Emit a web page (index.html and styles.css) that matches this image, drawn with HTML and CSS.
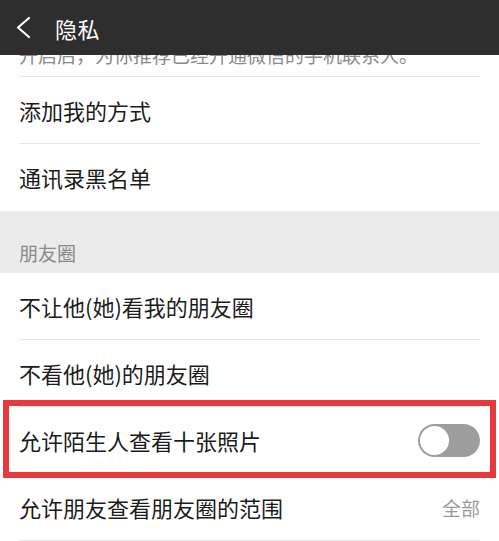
FILE: index.html
```html
<!DOCTYPE html>
<html lang="zh-CN">
<head>
<meta charset="utf-8">
<title>隐私</title>
<link rel="stylesheet" href="styles.css">
</head>
<body>
<header class="topbar">
  <svg class="back" width="20" height="24" viewBox="0 0 20 24" aria-hidden="true">
    <polyline points="14,2 3,11.5 14,21" fill="none" stroke="#ffffff" stroke-width="2.2" stroke-linecap="round" stroke-linejoin="round"/>
  </svg>
  <h1 class="title">隐私</h1>
</header>
<div class="clip-note"><p class="note-text">开启后，为你推荐已经开通微信的手机联系人。</p></div>
<ul class="group">
  <li class="row"><span class="label">添加我的方式</span></li>
  <li class="row last"><span class="label">通讯录黑名单</span></li>
</ul>
<div class="section-label">朋友圈</div>
<ul class="group">
  <li class="row"><span class="label">不让他(她)看我的朋友圈</span></li>
  <li class="row"><span class="label">不看他(她)的朋友圈</span></li>
  <li class="row highlight">
    <span class="label">允许陌生人查看十张照片</span>
    <span class="toggle"><span class="knob"></span></span>
    <span class="mark"></span>
  </li>
  <li class="row"><span class="label">允许朋友查看朋友圈的范围</span><span class="value">全部</span></li>
</ul>
</body>
</html>
```
FILE: styles.css
```css
html, body {
  margin: 0;
  padding: 0;
  background: #ffffff;
  font-family: "Noto Sans CJK SC", "Noto Sans", sans-serif;
  width: 499px;
  height: 541px;
  overflow: hidden;
}

.topbar {
  height: 55px;
  background: #2e2e2e;
  display: flex;
  align-items: center;
  padding-left: 15px;
  box-sizing: border-box;
}

.back {
  display: block;
  margin-top: 1px;
}

.title {
  margin: 0 0 0 20px;
  font-size: 22px;
  font-weight: 400;
  color: #ffffff;
  line-height: 22px;
  letter-spacing: 0.5px;
}

.clip-note {
  height: 21px;
  margin: 0 19px;
  border-bottom: 1px solid #e6e6e6;
  display: flex;
  align-items: flex-end;
  overflow: hidden;
  padding-bottom: 12px;
  box-sizing: content-box;
  height: 9px;
}

.note-text {
  margin: 0;
  font-size: 19px;
  line-height: 19px;
  color: #8a8a8a;
  white-space: nowrap;
  flex-shrink: 0;
}

.group {
  list-style: none;
  margin: 0;
  padding: 0;
}

.row {
  position: relative;
  margin: 0 19px;
  height: 66px;
  border-bottom: 1px solid #e6e6e6;
  display: flex;
  align-items: center;
  justify-content: space-between;
}

.row.last {
  border-bottom-color: transparent;
}

.label {
  font-size: 22px;
  line-height: 22px;
  color: #1c1c1c;
  white-space: nowrap;
}

.value {
  font-size: 19px;
  line-height: 19px;
  color: #9a9a9a;
}

.section-label {
  height: 62px;
  box-sizing: border-box;
  background: #ebebeb;
  padding: 0 19px 11px;
  display: flex;
  align-items: flex-end;
  font-size: 19px;
  line-height: 19px;
  color: #8a8a8a;
}

.toggle {
  width: 62px;
  height: 33px;
  box-sizing: border-box;
  padding: 2px;
  border-radius: 17px;
  background: #9e9e9e;
  display: flex;
  align-items: center;
  margin-top: 1px;
}

.knob {
  width: 29px;
  height: 29px;
  border-radius: 50%;
  background: #ffffff;
}

.mark {
  position: absolute;
  left: -16px;
  right: -16px;
  top: -7px;
  bottom: -5px;
  border: 6px solid #e8393c;
  pointer-events: none;
}
```
